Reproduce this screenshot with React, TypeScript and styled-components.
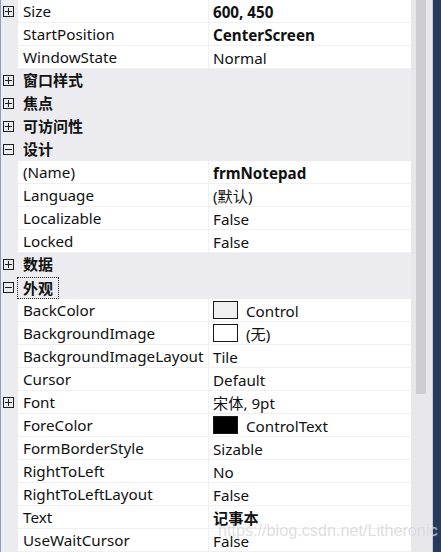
import React from 'react';
import styled, { createGlobalStyle } from 'styled-components';

const GlobalStyle = createGlobalStyle`
  html, body {
    margin: 0;
    padding: 0;
    background: #ececf0;
    overflow: hidden;
  }
  body {
    font-family: 'Noto Sans', 'Noto Sans CJK SC', sans-serif;
  }
`;

const Frame = styled.div`
  position: relative;
  width: 441px;
  height: 552px;
  display: flex;
  overflow: hidden;
  border-left: 1px solid #8e9bc6;
  box-sizing: border-box;
`;

const Grid = styled.div`
  width: 410px;
  display: flex;
  flex-direction: column;
  background: #ececf0;
`;

const ScrollTrack = styled.div`
  width: 22px;
  padding: 0 6px 0 5px;
  box-sizing: border-box;
  background: #e8e8ec;
  border-right: 1px solid #c9cbd4;
`;

const Thumb = styled.div`
  height: 394px;
  background: #cdcdd2;
`;

const EdgeStrip = styled.div`
  flex: 1;
  background: #253a5e;
`;

const Row = styled.div`
  height: 23px;
  display: grid;
  grid-template-columns: 17px 191px 202px;
  flex-shrink: 0;
`;

const Gutter = styled.div`
  width: 17px;
  display: flex;
  align-items: flex-start;
  padding: 6px 0 0 2px;
  box-sizing: border-box;
`;

const NameCell = styled.div`
  background: #ffffff;
  border-bottom: 1px solid #f0f0f0;
  border-right: 1px solid #f0f0f0;
  padding-left: 5px;
  padding-top: 1px;
  font-size: 15.2px;
  line-height: 21px;
  color: #111111;
  white-space: nowrap;
  overflow: hidden;
`;

const ValueCell = styled.div<{ $bold?: boolean }>`
  background: #ffffff;
  border-bottom: 1px solid #f0f0f0;
  padding-left: 4px;
  display: flex;
  align-items: center;
  gap: 8px;
  font-size: 15.2px;
  line-height: 22px;
  height: 22px;
  color: #111111;
  font-weight: ${(p) => (p.$bold ? 700 : 400)};
  white-space: nowrap;
`;

const ValueText = styled.span`
  padding-top: 1px;
`;

const Swatch = styled.span<{ $fill: string }>`
  width: 23px;
  height: 16px;
  border: 1px solid #1a1a1a;
  background: ${(p) => p.$fill};
  flex-shrink: 0;
`;

const CategoryRow = styled.div`
  height: 23px;
  display: flex;
  flex-shrink: 0;
`;

const CategoryLabel = styled.div<{ $focused?: boolean }>`
  margin-left: ${(p) => (p.$focused ? '-1px' : '0')};
  margin-top: ${(p) => (p.$focused ? '1px' : '0')};
  padding: 0 5px;
  font-family: 'Noto Sans CJK SC', sans-serif;
  font-weight: 700;
  font-size: 15px;
  line-height: ${(p) => (p.$focused ? '20px' : '22px')};
  height: ${(p) => (p.$focused ? '20px' : '22px')};
  border: ${(p) => (p.$focused ? '1px dotted #222' : 'none')};
  color: #111111;
`;

const Watermark = styled.div`
  position: absolute;
  z-index: 2;
  left: 217px;
  top: 521px;
  font-family: 'Liberation Sans', sans-serif;
  font-size: 16.2px;
  color: rgba(200, 200, 200, 0.6);
  text-shadow: 0 0 1px rgba(255, 255, 255, 0.6);
  pointer-events: none;
  white-space: nowrap;
`;

const Expander: React.FC<{ open?: boolean }> = ({ open }) => (
  <svg width="11" height="11" viewBox="0 0 11 11">
    <rect x="0.5" y="0.5" width="10" height="10" fill="none" stroke="#1e1e1e" />
    <line x1="2" y1="5.5" x2="9" y2="5.5" stroke="#1e1e1e" />
    {!open && <line x1="5.5" y1="2" x2="5.5" y2="9" stroke="#1e1e1e" />}
  </svg>
);

type Item =
  | { kind: 'cat'; label: string; open?: boolean; focused?: boolean }
  | { kind: 'prop'; name: string; value: string; bold?: boolean; swatch?: string; expandable?: boolean };

const items: Item[] = [
  { kind: 'prop', name: 'Size', value: '600, 450', bold: true, expandable: true },
  { kind: 'prop', name: 'StartPosition', value: 'CenterScreen', bold: true },
  { kind: 'prop', name: 'WindowState', value: 'Normal' },
  { kind: 'cat', label: '窗口样式' },
  { kind: 'cat', label: '焦点' },
  { kind: 'cat', label: '可访问性' },
  { kind: 'cat', label: '设计', open: true },
  { kind: 'prop', name: '(Name)', value: 'frmNotepad', bold: true },
  { kind: 'prop', name: 'Language', value: '(默认)' },
  { kind: 'prop', name: 'Localizable', value: 'False' },
  { kind: 'prop', name: 'Locked', value: 'False' },
  { kind: 'cat', label: '数据' },
  { kind: 'cat', label: '外观', open: true, focused: true },
  { kind: 'prop', name: 'BackColor', value: 'Control', swatch: '#f0f0f0' },
  { kind: 'prop', name: 'BackgroundImage', value: '(无)', swatch: '#ffffff' },
  { kind: 'prop', name: 'BackgroundImageLayout', value: 'Tile' },
  { kind: 'prop', name: 'Cursor', value: 'Default' },
  { kind: 'prop', name: 'Font', value: '宋体, 9pt', expandable: true },
  { kind: 'prop', name: 'ForeColor', value: 'ControlText', swatch: '#000000' },
  { kind: 'prop', name: 'FormBorderStyle', value: 'Sizable' },
  { kind: 'prop', name: 'RightToLeft', value: 'No' },
  { kind: 'prop', name: 'RightToLeftLayout', value: 'False' },
  { kind: 'prop', name: 'Text', value: '记事本', bold: true },
  { kind: 'prop', name: 'UseWaitCursor', value: 'False' },
];

const App: React.FC = () => {
  return (
    <>
      <GlobalStyle />
      <Frame>
        <Grid>
          {items.map((it, i) =>
            it.kind === 'cat' ? (
              <CategoryRow key={i}>
                <Gutter>
                  <Expander open={it.open} />
                </Gutter>
                <CategoryLabel $focused={it.focused}>{it.label}</CategoryLabel>
              </CategoryRow>
            ) : (
              <Row key={i}>
                <Gutter>{it.expandable && <Expander />}</Gutter>
                <NameCell>{it.name}</NameCell>
                <ValueCell $bold={it.bold}>
                  {it.swatch && <Swatch $fill={it.swatch} />}
                  <ValueText>{it.value}</ValueText>
                </ValueCell>
              </Row>
            )
          )}
        </Grid>
        <ScrollTrack>
          <Thumb />
        </ScrollTrack>
        <EdgeStrip />
        <Watermark>https://blog.csdn.net/Litheronic</Watermark>
      </Frame>
    </>
  );
};

export default App;
